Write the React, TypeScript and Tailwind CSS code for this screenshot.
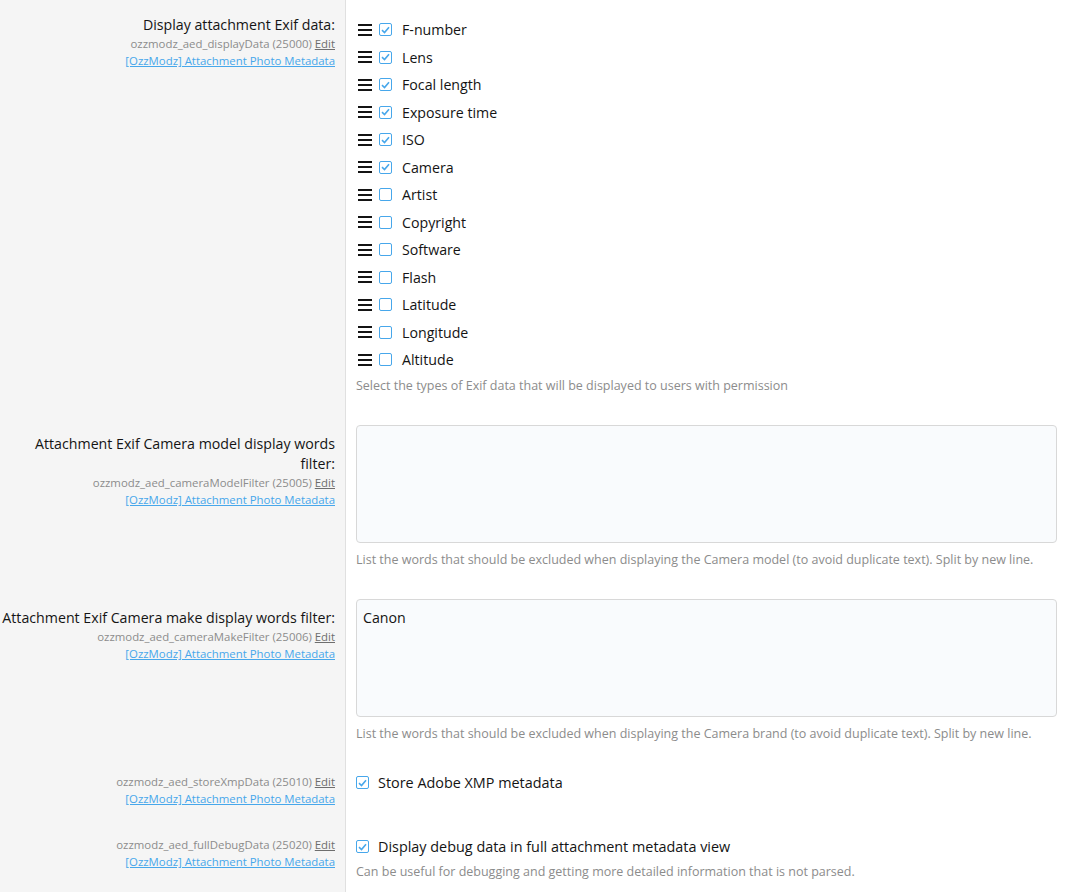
import React from "react";

const font = { fontFamily: '"Open Sans", "Noto Sans", sans-serif' };

const exifItems: { label: string; checked: boolean }[] = [
  { label: "F-number", checked: true },
  { label: "Lens", checked: true },
  { label: "Focal length", checked: true },
  { label: "Exposure time", checked: true },
  { label: "ISO", checked: true },
  { label: "Camera", checked: true },
  { label: "Artist", checked: false },
  { label: "Copyright", checked: false },
  { label: "Software", checked: false },
  { label: "Flash", checked: false },
  { label: "Latitude", checked: false },
  { label: "Longitude", checked: false },
  { label: "Altitude", checked: false },
];

function Bars() {
  return (
    <svg width="14" height="12" viewBox="0 0 14 12" className="shrink-0">
      <rect x="0" y="0" width="14" height="2" fill="#141414" />
      <rect x="0" y="5" width="14" height="2" fill="#141414" />
      <rect x="0" y="10" width="14" height="2" fill="#141414" />
    </svg>
  );
}

function Check({ checked }: { checked: boolean }) {
  return (
    <span className="w-[13px] h-[13px] shrink-0 rounded-[2px] border-[1.5px] border-[#47a7eb] bg-white flex items-center justify-center">
      {checked && (
        <svg width="9" height="8" viewBox="0 0 9 8">
          <path d="M1 4.2 L3.5 6.5 L8 1.2" fill="none" stroke="#47a7eb" strokeWidth="1.6" />
        </svg>
      )}
    </span>
  );
}

function Meta({ id, num }: { id: string; num: string }) {
  return (
    <div className="text-[11.4px] leading-[17px] text-[#8c8c8c]">
      <div>
        {id} ({num}) <span className="underline text-[#6e6e6e]">Edit</span>
      </div>
      <div>
        <span className="underline text-[#47a7eb]">[OzzModz] Attachment Photo Metadata</span>
      </div>
    </div>
  );
}

function Row({ label, dtPad, meta, children }: { label?: string; dtPad: string; meta: React.ReactNode; children: React.ReactNode }) {
  return (
    <div className="flex">
      <div className={`w-[346px] shrink-0 bg-[#f5f5f5] border-r border-[#e0e0e0] text-right pr-[10px] pb-[15px] ${dtPad}`}>
        {label && <div className="text-[14.2px] leading-[20px] text-[#141414]">{label}</div>}
        {meta}
      </div>
      <div className="flex-1 pl-[10px] pr-[8px] py-[15px]">{children}</div>
    </div>
  );
}

function Hint({ children }: { children: React.ReactNode }) {
  return <div className="text-[12.5px] leading-[18px] text-[#8c8c8c]">{children}</div>;
}

export default function App() {
  return (
    <div className="bg-white min-h-[892px] flex flex-col" style={font}>
      <Row label="Display attachment Exif data:" dtPad="pt-[15px]" meta={<Meta id="ozzmodz_aed_displayData" num="25000" />}>
        <ul className="pt-[1px]">
          {exifItems.map((it) => (
            <li key={it.label} className="h-[27.5px] flex items-center">
              <span className="pl-[2px]"><Bars /></span>
              <span className="ml-[7px]"><Check checked={it.checked} /></span>
              <span className="ml-[10px] text-[14.2px] text-[#141414]">{it.label}</span>
            </li>
          ))}
        </ul>
        <div className="mt-[3px]">
          <Hint>Select the types of Exif data that will be displayed to users with permission</Hint>
        </div>
      </Row>

      <Row label="Attachment Exif Camera model display words filter:" dtPad="pt-[24px]" meta={<Meta id="ozzmodz_aed_cameraModelFilter" num="25005" />}>
        <div className="h-[118px] rounded-[4px] border border-[#d8d8d8] bg-[#f9fbfd]" />
        <div className="mt-[8px]">
          <Hint>List the words that should be excluded when displaying the Camera model (to avoid duplicate text). Split by new line.</Hint>
        </div>
      </Row>

      <Row label="Attachment Exif Camera make display words filter:" dtPad="pt-[24px]" meta={<Meta id="ozzmodz_aed_cameraMakeFilter" num="25006" />}>
        <div className="h-[118px] rounded-[4px] border border-[#d8d8d8] bg-[#f9fbfd] px-[6px] pt-[8px] text-[14.2px] leading-[20px] text-[#141414]">
          Canon
        </div>
        <div className="mt-[8px]">
          <Hint>List the words that should be excluded when displaying the Camera brand (to avoid duplicate text). Split by new line.</Hint>
        </div>
      </Row>

      <Row dtPad="pt-[15px]" meta={<Meta id="ozzmodz_aed_storeXmpData" num="25010" />}>
        <div className="flex items-center h-[20px]">
          <Check checked />
          <span className="ml-[9px] text-[14.4px] text-[#141414]">Store Adobe XMP metadata</span>
        </div>
      </Row>

      <Row dtPad="pt-[14px]" meta={<Meta id="ozzmodz_aed_fullDebugData" num="25020" />}>
        <div className="flex items-center h-[20px]">
          <Check checked />
          <span className="ml-[9px] text-[14.4px] text-[#141414]">Display debug data in full attachment metadata view</span>
        </div>
        <div className="mt-[6px]">
          <Hint>Can be useful for debugging and getting more detailed information that is not parsed.</Hint>
        </div>
      </Row>
      <div className="flex flex-1">
        <div className="w-[346px] shrink-0 bg-[#f5f5f5] border-r border-[#e0e0e0]" />
      </div>
    </div>
  );
}
